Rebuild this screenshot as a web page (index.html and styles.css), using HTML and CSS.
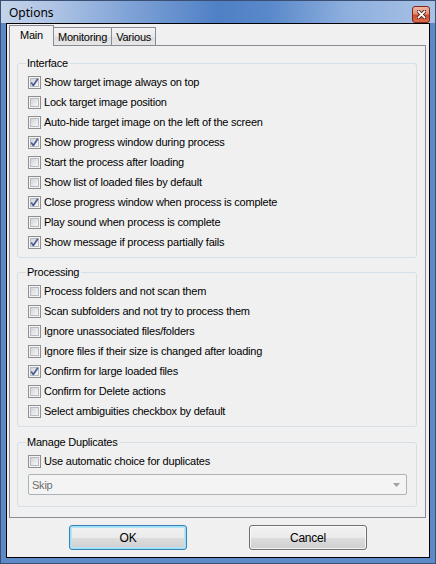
FILE: index.html
```html
<!DOCTYPE html>
<html>
<head>
<meta charset="utf-8">
<link rel="stylesheet" href="styles.css">
</head>
<body>
<div class="window">
  <div class="titlebar">
    <span class="title">Options</span>
    <div class="close">
      <svg width="9" height="9" viewBox="0 0 9 9">
        <path d="M1.5 1.5 L7.5 7.5 M7.5 1.5 L1.5 7.5" stroke="#4a1a10" stroke-width="3.4" stroke-linecap="square"/>
        <path d="M1.5 1.5 L7.5 7.5 M7.5 1.5 L1.5 7.5" stroke="#ffffff" stroke-width="1.8" stroke-linecap="square"/>
      </svg>
    </div>
  </div>
  <div class="client">
    <div class="tabs">
      <div class="tab active">Main</div>
      <div class="tab">Monitoring</div>
      <div class="tab">Various</div>
    </div>
    <div class="panel">
      <div class="group g-interface">
        <div class="group-head"><span>Interface</span></div>
        <div class="rows">
          <div class="row"><span class="cb checked"></span><span>Show target image always on top</span></div>
          <div class="row"><span class="cb"></span><span>Lock target image position</span></div>
          <div class="row"><span class="cb"></span><span>Auto-hide target image on the left of the screen</span></div>
          <div class="row"><span class="cb checked"></span><span>Show progress window during process</span></div>
          <div class="row"><span class="cb"></span><span>Start the process after loading</span></div>
          <div class="row"><span class="cb"></span><span>Show list of loaded files by default</span></div>
          <div class="row"><span class="cb checked"></span><span>Close progress window when process is complete</span></div>
          <div class="row"><span class="cb"></span><span>Play sound when process is complete</span></div>
          <div class="row"><span class="cb checked"></span><span>Show message if process partially fails</span></div>
        </div>
      </div>
      <div class="group g-processing">
        <div class="group-head"><span>Processing</span></div>
        <div class="rows">
          <div class="row"><span class="cb"></span><span>Process folders and not scan them</span></div>
          <div class="row"><span class="cb"></span><span>Scan subfolders and not try to process them</span></div>
          <div class="row"><span class="cb"></span><span>Ignore unassociated files/folders</span></div>
          <div class="row"><span class="cb"></span><span>Ignore files if their size is changed after loading</span></div>
          <div class="row"><span class="cb checked"></span><span>Confirm for large loaded files</span></div>
          <div class="row"><span class="cb"></span><span>Confirm for Delete actions</span></div>
          <div class="row"><span class="cb"></span><span>Select ambiguities checkbox by default</span></div>
        </div>
      </div>
      <div class="group g-dup">
        <div class="group-head"><span>Manage Duplicates</span></div>
        <div class="rows">
          <div class="row"><span class="cb"></span><span>Use automatic choice for duplicates</span></div>
        </div>
        <div class="combo">
          <span>Skip</span>
          <svg class="arrow" width="7" height="4" viewBox="0 0 7 4"><path d="M0 0 H7 L3.5 4 Z" fill="#a0a0a0"/></svg>
        </div>
      </div>
    </div>
    <div class="buttons">
      <div class="btn default">OK</div>
      <div class="btn">Cancel</div>
    </div>
  </div>
</div>
</body>
</html>
```

FILE: styles.css
```css
html, body {
  margin: 0;
  padding: 0;
  background: #f0f0f0;
}

.window {
  width: 436px;
  height: 564px;
  box-sizing: border-box;
  border: 1px solid #3a4f73;
  background: #5d89c9;
  padding: 0 5px 5px 5px;
  display: flex;
  flex-direction: column;
  font-family: "Liberation Sans", Arial, sans-serif;
  font-size: 11px;
  letter-spacing: -0.22px;
  color: #000;
}

.titlebar {
  height: 22px;
  margin: 0 -5px;
  padding: 0 5px 0 8px;
  display: flex;
  align-items: center;
  justify-content: space-between;
  background: linear-gradient(to right, #c3d3ea 0%, #aec4e4 12%, #7ea2d6 30%, #4f80c5 50%, #5a89ca 62%, #8eb0de 80%, #a8c1e4 100%);
}

.title {
  font-family: "Noto Sans", "Liberation Sans", sans-serif;
  font-size: 12px;
  letter-spacing: 0;
  color: #000;
  margin-top: 1px;
}

.close {
  width: 16px;
  height: 15px;
  margin-top: 5px;
  border: 1px solid #7d2a1c;
  border-radius: 3px;
  background: linear-gradient(to bottom, #eeb6a3 0%, #e39277 45%, #cf4b2d 55%, #dc6d4f 100%);
  display: flex;
  align-items: center;
  justify-content: center;
  align-self: flex-start;
}

.client {
  flex: 1;
  border: 1px solid #000;
  background: #f0f0f0;
  display: flex;
  flex-direction: column;
  padding: 1px 0 0 2px;
}

.tabs {
  display: flex;
  align-items: flex-end;
  height: 21px;
  position: relative;
  z-index: 1;
  margin-bottom: -1px;
}

.tab {
  height: 18px;
  box-sizing: border-box;
  border: 1px solid #898c95;
  border-bottom: none;
  padding: 1px 4px 0 4px;
  display: flex;
  align-items: center;
  background: linear-gradient(to bottom, #f3f3f3 0%, #ebebeb 50%, #dedede 51%, #e6e6e6 100%);
  margin-left: -1px;
  margin-bottom: 1px;
}

.tab.active {
  height: 21px;
  width: 45px;
  justify-content: center;
  margin-left: 0;
  margin-bottom: 0;
  background: #f0f0f0;
  padding: 0 0 2px 0;
  position: relative;
  z-index: 2;
}

.panel {
  width: 417px;
  height: 473px;
  box-sizing: border-box;
  border: 1px solid #898c95;
  background: #f0f0f0;
  padding: 17px 8px 0 7px;
}

.group {
  border: 1px solid #d5dfe5;
  border-radius: 3px;
  padding: 0 0 5px 10px;
}

.group-head {
  height: 14px;
  line-height: 14px;
  margin-top: -8px;
  margin-left: -2px;
}

.group-head span {
  background: #f0f0f0;
  padding: 0 2px 0 1px;
}

.rows {
  margin-top: 2px;
}

.row {
  height: 20px;
  display: flex;
  align-items: center;
  gap: 3px;
}

.cb {
  width: 13px;
  height: 13px;
  box-sizing: border-box;
  border: 1px solid #8f8f8f;
  background: #f4f4f4;
  position: relative;
  flex: none;
}

.cb::before {
  content: "";
  position: absolute;
  left: 1px;
  top: 1px;
  right: 1px;
  bottom: 1px;
  border: 1px solid #b8bcc2;
  background: linear-gradient(135deg, #d2d4d8 0%, #e8e9ea 60%, #f6f6f6 100%);
}

.cb.checked::after {
  content: "";
  position: absolute;
  left: 0;
  top: 0;
  width: 11px;
  height: 11px;
  background-image: url("data:image/svg+xml;utf8,<svg xmlns='http://www.w3.org/2000/svg' width='11' height='11' viewBox='0 0 11 11'><path d='M2.2 5.6 L4.3 8.4 L8.8 1.8' fill='none' stroke='%234a5c92' stroke-width='1.7' stroke-linejoin='round'/></svg>");
}

.g-processing {
  margin-top: 14px;
}

.g-dup {
  margin-top: 15px;
  padding-bottom: 11px;
  padding-right: 9px;
}

.combo {
  margin-top: 3px;
  height: 21px;
  box-sizing: border-box;
  border: 1px solid #adb2b5;
  border-radius: 2px;
  background: #f4f4f4;
  color: #6d6d6d;
  display: flex;
  align-items: center;
  justify-content: space-between;
  padding: 0 6px 0 3px;
}

.buttons {
  display: flex;
  justify-content: center;
  gap: 62px;
  margin-top: 7px;
  margin-left: -2px;
}

.btn {
  width: 118px;
  height: 25px;
  box-sizing: border-box;
  border: 1px solid #707070;
  border-radius: 3px;
  background: linear-gradient(to bottom, #f2f2f2 0%, #ebebeb 50%, #dddddd 51%, #cfcfcf 100%);
  box-shadow: inset 0 0 0 1px rgba(255,255,255,0.7);
  display: flex;
  align-items: center;
  justify-content: center;
  font-size: 12px;
}

.btn.default {
  border-color: #3c7fb1;
  box-shadow: inset 0 0 0 1px #48d8fb44, inset 0 0 0 2px #b6e4f7;
}
```
